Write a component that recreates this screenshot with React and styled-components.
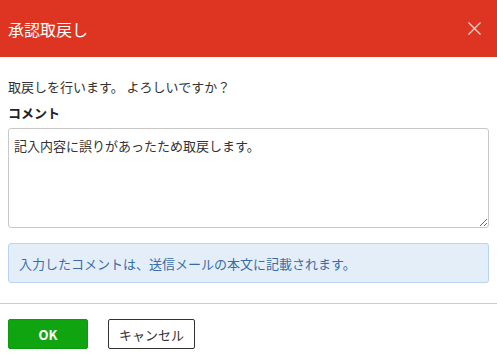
import React from 'react';
import styled, { createGlobalStyle } from 'styled-components';

const GlobalStyle = createGlobalStyle`
  html, body {
    margin: 0;
    padding: 0;
    background: #ffffff;
  }
  body {
    font-family: "Noto Sans CJK JP", "Noto Sans", sans-serif;
    color: #333333;
  }
`;

const Dialog = styled.div`
  width: 497px;
  height: 362px;
  display: flex;
  flex-direction: column;
  background: #ffffff;
`;

const Header = styled.div`
  height: 57px;
  flex-shrink: 0;
  padding: 0 16px 0 8px;
  display: flex;
  align-items: center;
  justify-content: space-between;
  background: #dd3521;
  box-sizing: border-box;
`;

const Title = styled.h1`
  margin: 0;
  font-size: 16px;
  font-weight: 400;
  color: #ffffff;
  line-height: 20px;
`;

const CloseButton = styled.button`
  width: 13px;
  height: 13px;
  padding: 0;
  border: none;
  background: none;
  display: flex;
  cursor: pointer;
`;

const Body = styled.div`
  padding: 20px 8px 20px;
  display: flex;
  flex-direction: column;
  border-bottom: 1px solid #cccccc;
`;

const Message = styled.p`
  margin: 0;
  font-size: 13px;
  line-height: 20px;
  color: #333333;
`;

const Label = styled.label`
  margin-top: 6px;
  font-size: 13px;
  font-weight: 700;
  line-height: 20px;
  color: #222222;
`;

const Comment = styled.textarea`
  margin-top: 5px;
  height: 100px;
  box-sizing: border-box;
  padding: 7px 5px;
  border: 1px solid #c8c8c8;
  border-radius: 3px;
  font-family: "Noto Sans CJK JP", "Noto Sans", sans-serif;
  font-size: 13px;
  line-height: 20px;
  color: #333333;
  resize: vertical;
  outline: none;
`;

const Notice = styled.div`
  margin-top: 15px;
  height: 40px;
  box-sizing: border-box;
  padding: 0 10px;
  display: flex;
  align-items: center;
  background: #e4eef9;
  border: 1px solid #bad3ee;
  border-radius: 3px;
  font-size: 13px;
  color: #3a6da6;
`;

const Footer = styled.div`
  padding: 15px 8px;
  display: flex;
  gap: 20px;
`;

const Button = styled.button`
  height: 30px;
  min-width: ${({ $width }) => $width}px;
  box-sizing: border-box;
  padding: 0 10px;
  border-radius: 2px;
  font-family: "Noto Sans CJK JP", "Noto Sans", sans-serif;
  font-size: 13px;
  cursor: pointer;
  border: 1px solid ${({ $primary }) => ($primary ? '#0e9a0e' : '#333333')};
  background: ${({ $primary }) => ($primary ? '#10a510' : '#ffffff')};
  color: ${({ $primary }) => ($primary ? '#ffffff' : '#333333')};
  font-weight: ${({ $primary }) => ($primary ? 600 : 400)};
`;

const App = () => {
  return (
    <>
      <GlobalStyle />
      <Dialog>
        <Header>
          <Title>承認取戻し</Title>
          <CloseButton aria-label="閉じる">
            <svg width="13" height="13" viewBox="0 0 13 13">
              <path d="M0.5 0.5 L12.5 12.5 M12.5 0.5 L0.5 12.5" stroke="#f6d4cf" strokeWidth="1.3" fill="none" />
            </svg>
          </CloseButton>
        </Header>
        <Body>
          <Message>取戻しを行います。 よろしいですか？</Message>
          <Label>コメント</Label>
          <Comment defaultValue="記入内容に誤りがあったため取戻します。" />
          <Notice>入力したコメントは、送信メールの本文に記載されます。</Notice>
        </Body>
        <Footer>
          <Button $primary $width={80}>OK</Button>
          <Button $width={87}>キャンセル</Button>
        </Footer>
      </Dialog>
    </>
  );
};

export default App;
